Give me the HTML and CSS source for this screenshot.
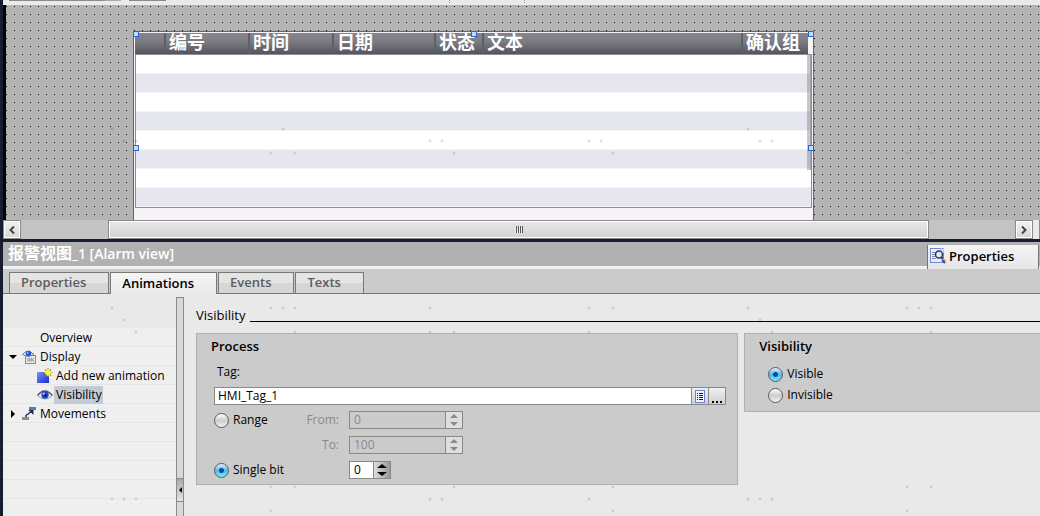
FILE: index.html
```html
<!DOCTYPE html>
<html lang="en">
<head>
    <meta charset="UTF-8">
    <meta name="viewport" content="width=device-width, initial-scale=1.0">
    <title>报警视图_1 [Alarm view]</title>
    <link rel="stylesheet" href="styles.css">
</head>
<body>
    <div class="editor">
        <div class="ruler">
            <span class="ruler-block"></span>
            <span class="ruler-block ruler-short"></span>
            <span class="ruler-ticks"></span>
        </div>

        <div class="canvas">
            <div class="alarm-view">
                <table class="alarm-table">
                    <colgroup>
                        <col class="col-icon">
                        <col class="col-no">
                        <col class="col-time">
                        <col class="col-date">
                        <col class="col-state">
                        <col>
                        <col class="col-group">
                    </colgroup>
                    <thead>
                        <tr>
                            <th></th>
                            <th>编号</th>
                            <th>时间</th>
                            <th>日期</th>
                            <th>状态</th>
                            <th>文本</th>
                            <th>确认组</th>
                        </tr>
                    </thead>
                </table>
                <div class="alarm-rows">
                    <div class="alarm-scroll"></div>
                </div>
                <span class="handle top left"></span>
                <span class="handle top center"></span>
                <span class="handle top right"></span>
                <span class="handle middle left"></span>
                <span class="handle middle right"></span>
            </div>
        </div>

        <div class="scrollbar">
            <button class="scroll-btn" aria-label="Scroll left">
                <svg width="6" height="8" viewBox="0 0 6 8"><path d="M5 0.5L1.5 4L5 7.5" fill="none" stroke="#444" stroke-width="2"/></svg>
            </button>
            <div class="scroll-track">
                <div class="scroll-thumb"><span class="grip"></span></div>
            </div>
            <button class="scroll-btn" aria-label="Scroll right">
                <svg width="6" height="8" viewBox="0 0 6 8"><path d="M1 0.5L4.5 4L1 7.5" fill="none" stroke="#444" stroke-width="2"/></svg>
            </button>
            <div class="scroll-end"></div>
        </div>

        <div class="title-bar">
            <h1><span class="object-name">报警视图</span>_1 [Alarm view]</h1>
            <button class="title-tab">
                <svg width="17" height="17" viewBox="0 0 17 17">
                    <rect x="0.5" y="0.5" width="13" height="14" fill="#e8eefc" stroke="#6f86dc"/>
                    <path d="M2 4.5h4M2 6.5h3M2 8.5h3M2 10.5h4" stroke="#7f89a8"/>
                    <path d="M11.5 0v3M13.5 0v5" stroke="#b9c4ea"/>
                    <circle cx="9" cy="6.5" r="3.5" fill="#dcecff" stroke="#3a3658" stroke-width="1.5"/>
                    <path d="M11.5 9.5L13 11" stroke="#2c2a44" stroke-width="2"/>
                    <path d="M12.5 11L15.5 14" stroke="#e0b030" stroke-width="3"/>
                    <path d="M12 12L15 15" stroke="#2b4fae" stroke-width="2"/>
                </svg>
                Properties
            </button>
        </div>

        <div class="tabs">
            <button class="tab">Properties</button>
            <button class="tab active">Animations</button>
            <button class="tab">Events</button>
            <button class="tab">Texts</button>
        </div>

        <div class="inspector">
            <ul class="tree">
                <li class="tree-row"><span class="arrow"></span><span class="tree-icon"></span><span class="tree-label">Overview</span></li>
                <li class="tree-row">
                    <span class="arrow"><svg width="8" height="4" viewBox="0 0 8 4"><path d="M0 0h8L4 4z"/></svg></span>
                    <span class="tree-icon">
                        <svg width="15" height="14" viewBox="0 0 15 14">
                            <rect x="3.5" y="5.5" width="10" height="8" fill="#e6e6e6" stroke="#8c8c8c"/>
                            <path d="M6 8.5h2v2.5h-2zM9.5 8v3.5M12 8l-2 2l2 1.5" fill="none" stroke="#9a9a9a"/>
                            <path d="M0.5 4.5Q5.5 -2 12 4.5Q6 8 0.5 4.5z" fill="#e2e6f2" stroke="#73778c"/>
                            <circle cx="6.5" cy="3.5" r="2.7" fill="#2850d8"/>
                            <circle cx="5.8" cy="2.8" r="1" fill="#8fb4ff"/>
                        </svg>
                    </span>
                    <span class="tree-label">Display</span>
                </li>
                <li class="tree-row child">
                    <span class="tree-icon">
                        <svg width="16" height="15" viewBox="0 0 16 15">
                            <defs>
                                <linearGradient id="blue" x1="0" y1="0" x2="1" y2="1">
                                    <stop offset="0" stop-color="#7890ff"/>
                                    <stop offset="1" stop-color="#1c2cc8"/>
                                </linearGradient>
                            </defs>
                            <rect x="0" y="4" width="12" height="11" fill="url(#blue)"/>
                            <path d="M11 0v9M6.5 4.5h9M8 1.5l6 6M14 1.5l-6 6" stroke="#8a8f20" stroke-width="1.2"/>
                            <path d="M11 1v7M7.5 4.5h7M9 2.5l4 4M13 2.5l-4 4" stroke="#fff44a" stroke-width="1.4"/>
                        </svg>
                    </span>
                    <span class="tree-label">Add new animation</span>
                </li>
                <li class="tree-row child">
                    <span class="tree-icon">
                        <svg width="16" height="10" viewBox="0 0 16 10">
                            <path d="M0.5 5.5Q7.5 -3.5 15.5 5.5Q8 12.5 0.5 5.5z" fill="#eef1fa"/>
                            <path d="M0.5 5.5Q7.5 -3.5 15.5 5.5" fill="none" stroke="#4b5063" stroke-width="1.3"/>
                            <path d="M0.5 5.5Q8 12.5 15.5 5.5" fill="none" stroke="#9a9eb0"/>
                            <circle cx="8" cy="5" r="3.7" fill="#2346c4"/>
                            <circle cx="8.5" cy="5.5" r="1.5" fill="#0a1c78"/>
                            <circle cx="6.8" cy="3.6" r="1.2" fill="#9cc0ff"/>
                        </svg>
                    </span>
                    <span class="tree-label selected">Visibility</span>
                </li>
                <li class="tree-row">
                    <span class="arrow"><svg width="8" height="8" viewBox="0 0 8 8"><path d="M2 0v8L6 4z"/></svg></span>
                    <span class="tree-icon">
                        <svg width="15" height="14" viewBox="0 0 15 14">
                            <rect x="7" y="0" width="7" height="3" fill="#3c88b4"/>
                            <rect x="0" y="10" width="7" height="3" fill="#8e8e8e"/>
                            <path d="M4 10V8.5L10 4" fill="none" stroke="#28284c" stroke-width="1.5"/>
                            <path d="M6.5 3h5v5z" fill="#28284c"/>
                        </svg>
                    </span>
                    <span class="tree-label">Movements</span>
                </li>
            </ul>

            <div class="splitter">
                <button class="splitter-btn" aria-label="Collapse tree">
                    <svg width="3" height="6" viewBox="0 0 3 6"><path d="M3 0v6L0 3z"/></svg>
                </button>
            </div>

            <div class="details">
                <h2 class="section-title">Visibility</h2>
                <div class="groups">
                    <div class="group">
                        <h3>Process</h3>
                        <label class="tag-label" for="tag">Tag:</label>
                        <div class="tag-row">
                            <input type="text" id="tag" value="HMI_Tag_1">
                            <button class="tag-btn" aria-label="Select tag">
                                <svg width="11" height="13" viewBox="0 0 11 13">
                                    <rect x="0.5" y="0.5" width="9" height="12" fill="#f4f7ff" stroke="#7080d8"/>
                                    <path d="M2 3.5h1M4 3.5h4M2 5.5h1M4 5.5h4M2 7.5h1M4 7.5h4M2 9.5h1M4 9.5h4" stroke="#10104c"/>
                                </svg>
                            </button>
                            <button class="tag-btn" aria-label="Browse">
                                <svg width="10" height="13" viewBox="0 0 10 13"><path d="M0 11h2v2h-2zM4 11h2v2h-2zM8 11h2v2h-2z"/></svg>
                            </button>
                        </div>
                        <div class="range-grid">
                            <label class="radio"><input type="radio" name="mode">Range</label>
                            <label class="dim" for="from">From:</label>
                            <div class="spin disabled">
                                <input type="text" id="from" value="0" disabled>
                                <button disabled aria-label="Change from"><svg width="8" height="12" viewBox="0 0 8 12"><path d="M0 4h8L4 0zM0 8h8L4 12z"/></svg></button>
                            </div>
                            <label class="dim to" for="to">To:</label>
                            <div class="spin disabled">
                                <input type="text" id="to" value="100" disabled>
                                <button disabled aria-label="Change to"><svg width="8" height="12" viewBox="0 0 8 12"><path d="M0 4h8L4 0zM0 8h8L4 12z"/></svg></button>
                            </div>
                            <label class="radio single"><input type="radio" name="mode" checked>Single bit</label>
                            <div class="spin small">
                                <input type="text" value="0" aria-label="Bit">
                                <button aria-label="Change bit"><svg width="10" height="12" viewBox="0 0 10 12"><path d="M0 4h10L5 0zM0 8h10L5 12z"/></svg></button>
                            </div>
                        </div>
                    </div>
                    <div class="group last">
                        <h3>Visibility</h3>
                        <div class="radio-list">
                            <label class="radio"><input type="radio" name="visibility" checked>Visible</label>
                            <label class="radio"><input type="radio" name="visibility">Invisible</label>
                        </div>
                    </div>
                </div>
            </div>
        </div>

        <!-- faint dots over the whole window -->
        <svg class="marks" width="1040" height="516" viewBox="0 0 1040 516">
            <path d="M112 129h0M124 141h0M136 141h0M283 129h0M271 153h0M295 153h0M430 141h0M442 141h0M454 153h0M589 141h0M601 141h0M613 153h0M748 129h0M760 141h0M772 141h0M919 129h0M907 153h0M931 153h0"/>
            <path d="M112 308h0M124 320h0M136 332h0M271 308h0M283 308h0M295 308h0M295 332h0M430 308h0M430 332h0M454 332h0M589 308h0M613 308h0M589 332h0M748 308h0M760 320h0M772 332h0M907 308h0M919 308h0M931 308h0M931 332h0"/>
            <path d="M112 499h0M124 499h0M136 499h0M271 487h0M295 487h0M271 511h0M454 487h0M430 499h0M442 499h0M613 487h0M589 499h0M613 511h0M748 499h0M760 499h0M772 499h0M907 487h0M931 487h0M907 511h0"/>
        </svg>
    </div>
</body>
</html>
```
FILE: styles.css
```css
* {
    box-sizing: border-box;
}
body {
    margin: 0;
    font-family: "Open Sans", "Noto Sans CJK SC", sans-serif;
    font-size: 12px;
    line-height: 18px;
    color: #000;
    background-color: #171e2f;
}
button,
input {
    font: inherit;
    color: inherit;
    margin: 0;
    padding: 0;
    border-radius: 0;
}
h1, h2, h3, ul {
    margin: 0;
    padding: 0;
}
svg {
    display: block;
    flex: none;
}
.editor {
    position: relative;
    display: flex;
    flex-direction: column;
    min-height: 100vh;
    padding-left: 3px;
    overflow: hidden;
}
.marks {
    position: absolute;
    left: 0;
    top: 0;
    pointer-events: none;
    stroke: rgba(0, 0, 0, 0.12);
    stroke-width: 3px;
    stroke-linecap: round;
}

/* screen editor */
.ruler {
    display: flex;
    gap: 24px;
    height: 5px;
    padding-left: 6px;
    background-color: #eaeaea;
}
.ruler-block {
    width: 96px;
    height: 1px;
    background-color: #888;
    box-shadow: 16px 0 #aaa;
}
.ruler-short {
    width: 37px;
    box-shadow: none;
}
.ruler-ticks {
    width: 76px;
    height: 3px;
    margin-left: 259px;
    border: 1px dotted #999;
    border-width: 0 1px;
}
.canvas {
    position: relative;
    height: 215px;
    overflow: hidden;
    border-left: 3px solid #000;
    background-color: #b4b4b4;
    background-image: linear-gradient(90deg, transparent 1px, #b4b4b4 1px), linear-gradient(#000 1px, #b4b4b4 1px);
    background-size: 8px 8px;
    background-position: 0 1px;
}
.alarm-view {
    position: absolute;
    left: 127px;
    top: 26px;
    width: 681px;
    height: 220px;
    padding: 1px;
    border: 1px solid #62626e;
    background-color: #f7f2f7;
}
.alarm-table {
    width: 673px;
    table-layout: fixed;
    border-collapse: collapse;
    color: #fff;
    background: linear-gradient(#85868c, #7c7d83 40%, #55545e);
}
.alarm-table th {
    height: 21px;
    padding: 0 0 2px 3px;
    font-size: 18px;
    line-height: 19px;
    font-weight: 700;
    text-align: left;
    white-space: nowrap;
    border-left: 2px solid #5f5f69;
}
.alarm-table th:first-child {
    border-left: 0;
}
.col-icon { width: 30px; }
.col-no, .col-time { width: 84px; }
.col-date { width: 102px; }
.col-state { width: 48px; }
.col-group { width: 66px; }
.alarm-rows {
    display: flex;
    justify-content: flex-end;
    height: 154px;
    border: 1px solid #8e8e98;
    background: repeating-linear-gradient(#fff 0 18px, #f3f3f7 18px 19px, #e6e6ef 19px 37px, #f5f5f9 37px 38px);
}
.alarm-scroll {
    width: 4px;
    height: 115px;
    background-color: rgba(120, 120, 130, 0.4);
    border-right: 1px solid #a2a2a8;
}
.handle {
    position: absolute;
    width: 6px;
    height: 6px;
    border: 1px solid #2c62d4;
    background-color: #b8e2fa;
}
.handle.top { top: -1px; }
.handle.middle { top: 113px; }
.handle.left { left: -1px; }
.handle.center { left: calc(50% - 3px); }
.handle.right { right: -1px; }

/* horizontal scrollbar */
.scrollbar {
    display: flex;
    height: 19px;
    background-color: #c3c3c3;
}
.scroll-btn {
    display: flex;
    align-items: center;
    justify-content: center;
    width: 18px;
    border: 1px solid #8a8a8a;
    background: linear-gradient(#f2f2f2, #d6d6d6);
    box-shadow: inset 0 0 0 1px #fff;
}
.scroll-track {
    flex: 1;
    padding: 0 86px 0 87px;
}
.scroll-thumb {
    display: flex;
    align-items: center;
    justify-content: center;
    height: 19px;
    border: 1px solid #8a8a8a;
    background: linear-gradient(#e8e8e8, #d2d2d2);
    box-shadow: inset 0 0 0 1px #fff;
}
.grip {
    width: 8px;
    height: 7px;
    background: repeating-linear-gradient(90deg, #eee 0 1px, #555 1px 2px);
}
.scroll-end {
    width: 7px;
    border-right: 1px solid #8a8a8a;
    background-color: #eaeaea;
}

/* inspector header */
.title-bar {
    display: flex;
    justify-content: space-between;
    height: 27px;
    margin-top: 3px;
    padding: 0 1px 0 5px;
    border-bottom: 3px solid #f0f0f0;
    background-color: #b1b1b1;
}
.title-bar h1 {
    font-size: 14px;
    line-height: 23px;
    color: #fff;
    font-weight: 600;
}
.object-name {
    font-size: 16px;
}
.title-tab {
    display: flex;
    align-items: center;
    gap: 2px;
    width: 112px;
    height: 24px;
    margin-top: 3px;
    padding: 0 0 2px 2px;
    border: 0;
    border-left: 1px solid #777;
    border-right: 1px solid #777;
    background: linear-gradient(#f4f4f4, #e6e6e6);
    font-size: 13px;
    font-weight: 600;
}
.tabs {
    display: flex;
    gap: 1px;
    height: 25px;
    padding: 3px 0 0 6px;
    background: linear-gradient(#777, #777) bottom / 100% 1px no-repeat #cbcbcb;
}
.tab {
    height: 22px;
    padding: 0 22px 2px 11px;
    border: 1px solid #777;
    background: linear-gradient(#e4e4e4 50%, #d6d6d6 50%);
    font-size: 13px;
    font-weight: 600;
    line-height: 18px;
    color: #5c5c5c;
}
.tab.active {
    border-bottom: 0;
    background: linear-gradient(#f6f6f6, #e9e9e9);
    color: #000;
}

/* inspector body */
.inspector {
    display: flex;
    flex: 1;
    background-color: #e9e9e9;
}
.tree {
    width: 173px;
    margin-top: 34px;
    padding-left: 2px;
    list-style: none;
    background: repeating-linear-gradient(#efefef 0 18px, #e6e6e6 18px 19px);
}
.tree-row {
    display: flex;
    align-items: center;
    height: 19px;
    padding-left: 4px;
}
.tree-row.child {
    padding-left: 32px;
}
.arrow {
    width: 13px;
}
.tree-icon {
    width: 16px;
}
.tree-label {
    padding: 0 1px 0 2px;
    white-space: nowrap;
}
.child .tree-label {
    margin-left: 1px;
}
.tree-label.selected {
    background-color: #c2cad4;
}
.splitter {
    display: flex;
    flex-direction: column;
    justify-content: flex-end;
    width: 8px;
    margin-top: 3px;
    padding-bottom: 14px;
    border: 1px solid #8a8a8a;
    border-bottom: 0;
    background-color: #d8d8d8;
}
.splitter-btn {
    display: flex;
    align-items: center;
    justify-content: center;
    height: 24px;
    border: 0;
    border-top: 1px solid #8a8a8a;
    border-bottom: 1px solid #8a8a8a;
    background: linear-gradient(#aaa, #e4e4e4);
}
.details {
    flex: 1;
    padding: 12px 0 0 12px;
}
.section-title {
    display: flex;
    align-items: center;
    gap: 5px;
    font-size: 13px;
    font-weight: 400;
}
.section-title::after {
    content: "";
    flex: 1;
    height: 1px;
    margin-top: 13px;
    background-color: #000;
}
.groups {
    display: grid;
    grid-template-columns: 11fr 6fr;
    gap: 6px;
    align-items: start;
    margin-top: 9px;
}
.group {
    padding: 3px 11px 5px 17px;
    border: 1px solid #b0b0b0;
    background-color: #cbcbcb;
}
.group.last {
    padding: 3px 14px 7px;
    border-right: 0;
}
.group h3 {
    margin-left: -3px;
    font-size: 13px;
    line-height: 18px;
    font-weight: 600;
}
.group.last h3 {
    margin-left: 0;
}
.tag-label {
    display: block;
    margin: 8px 0 6px 3px;
}
.tag-row {
    display: flex;
}
.tag-row input {
    flex: 1;
    min-width: 0;
    height: 18px;
    padding-left: 3px;
    border: 1px solid #888;
    background-color: #fff;
}
.tag-btn {
    display: flex;
    align-items: center;
    justify-content: center;
    width: 18px;
    height: 18px;
    margin-left: -1px;
    border: 1px solid #888;
    background: linear-gradient(#f0f0f0, #cfcfcf);
}
.range-grid {
    display: grid;
    grid-template-columns: 80px 45px auto;
    justify-content: start;
    column-gap: 5px;
    row-gap: 7px;
    margin-top: 6px;
}
.dim {
    text-align: right;
    padding-right: 5px;
    color: #8a8a8a;
}
.dim.to {
    grid-column: 2;
}
.radio {
    display: flex;
    align-items: center;
    gap: 4px;
    white-space: nowrap;
}
.radio.single {
    grid-column: 1 / 3;
}
.radio input {
    appearance: none;
    width: 15px;
    height: 15px;
    border: 1px solid #5a5a5a;
    border-radius: 50%;
    background: linear-gradient(#fff, #ccc 50%, #f4f4f4);
}
.radio input:checked {
    background: radial-gradient(circle, #0a4a94 0 2px, transparent 3px), linear-gradient(#e2f1ff, #58b4ee 50%, #6ef0fa);
}
.radio-list {
    display: flex;
    flex-direction: column;
    gap: 3px;
    margin: 10px 0 0 9px;
}
.spin {
    display: flex;
    width: 114px;
    height: 18px;
    border: 1px solid #888;
    background-color: #fff;
}
.spin.small {
    width: 42px;
}
.spin input {
    flex: 1;
    min-width: 0;
    padding-left: 4px;
    border: 0;
    background: none;
}
.spin button {
    display: flex;
    align-items: center;
    justify-content: center;
    width: 17px;
    border: 0;
    border-left: 1px solid #888;
    background: linear-gradient(90deg, #ddd, #999);
}
.spin.disabled {
    color: #8a8a8a;
    background-color: #cbcbcb;
}
.spin.disabled button {
    background: #dedede;
}
.spin svg {
    fill: currentColor;
}
```
